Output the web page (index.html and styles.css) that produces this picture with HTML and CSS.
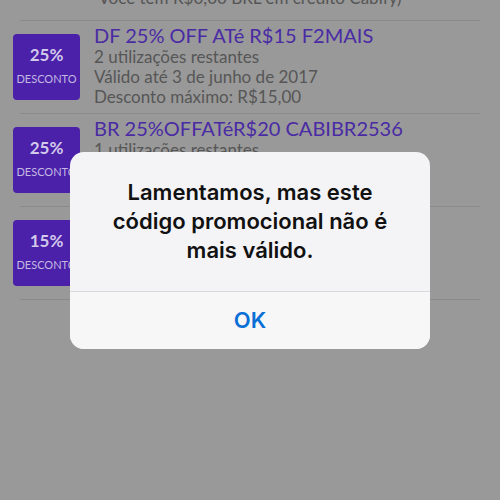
FILE: index.html
```html
<!DOCTYPE html>
<html lang="pt-BR">
<head>
<meta charset="utf-8">
<link rel="stylesheet" href="styles.css">
</head>
<body>
<div class="screen">
  <p class="intro">Você tem R$0,00 BRL em crédito Cabify)</p>
  <div class="sep"></div>
  <div class="item">
    <div class="badge"><span class="pct">25%</span><span class="lbl">DESCONTO</span></div>
    <div class="info">
      <div class="title">DF 25% OFF ATé R$15 F2MAIS</div>
      <div class="line">2 utilizações restantes</div>
      <div class="line">Válido até 3 de junho de 2017</div>
      <div class="line">Desconto máximo: R$15,00</div>
    </div>
  </div>
  <div class="sep"></div>
  <div class="item">
    <div class="badge"><span class="pct">25%</span><span class="lbl">DESCONTO</span></div>
    <div class="info">
      <div class="title">BR 25%OFFATéR$20 CABIBR2536</div>
      <div class="line">1 utilizações restantes</div>
      <div class="line">Válido até 30 de junho de 2017</div>
      <div class="line">Desconto máximo: R$20,00</div>
    </div>
  </div>
  <div class="sep"></div>
  <div class="item">
    <div class="badge"><span class="pct">15%</span><span class="lbl">DESCONTO</span></div>
    <div class="info">
      <div class="title">SP 15% OFF ATé R$10</div>
      <div class="line">1 utilizações restantes</div>
      <div class="line">Válido até 1 de julho de 2017</div>
      <div class="line">Desconto máximo: R$10,00</div>
    </div>
  </div>
  <div class="sep"></div>

  <div class="overlay">
    <div class="alert">
      <div class="alert-msg">Lamentamos, mas este<br>código promocional não é<br>mais válido.</div>
      <div class="alert-btn">OK</div>
    </div>
  </div>
</div>
</body>
</html>
```
FILE: styles.css
```css
* { box-sizing: border-box; }
html, body { margin: 0; padding: 0; }
body { background: #999999; }
.screen {
  position: relative;
  width: 500px;
  height: 500px;
  overflow: hidden;
  background: #999999;
  font-family: "Lato", "Liberation Sans", sans-serif;
}
.intro {
  margin: -12px 0 12px;
  text-align: center;
  font-size: 17px;
  line-height: 20px;
  color: #555555;
}
.sep {
  height: 1px;
  margin: 0 20px;
  background: #8a8a8a;
}
.item {
  display: flex;
  align-items: flex-start;
  height: 92px;
  padding-left: 13px;
  overflow: hidden;
}
.badge {
  flex: none;
  width: 67px;
  height: 66px;
  margin-top: 13px;
  border-radius: 4px;
  background: #4b21a9;
  display: flex;
  flex-direction: column;
  align-items: center;
  padding-top: 11px;
}
.pct {
  font-weight: 700;
  font-size: 17px;
  line-height: 20px;
  color: #d2c9ea;
}
.lbl {
  margin-top: 7px;
  font-size: 11px;
  line-height: 13px;
  color: #c3b8e2;
}
.info {
  margin-left: 14px;
  margin-top: 2px;
}
.title {
  font-size: 20px;
  line-height: 24px;
  color: #4a2ba4;
}
.line {
  font-size: 17px;
  line-height: 20px;
  color: #565656;
}
.overlay {
  position: absolute;
  inset: 0;
  display: flex;
  align-items: center;
  justify-content: center;
}
.alert {
  width: 360px;
  border-radius: 14px;
  background: #f4f4f6;
  overflow: hidden;
  font-family: "Inter", "Liberation Sans", sans-serif;
}
.alert-msg {
  padding: 26px 10px 26px;
  text-align: center;
  font-size: 22px;
  font-weight: 600;
  line-height: 29px;
  color: #111111;
}
.alert-btn {
  border-top: 1px solid #d9d9dc;
  height: 58px;
  line-height: 57px;
  text-align: center;
  font-size: 22px;
  font-weight: 600;
  color: #0a6fd6;
  background: #f7f7f8;
}
```
